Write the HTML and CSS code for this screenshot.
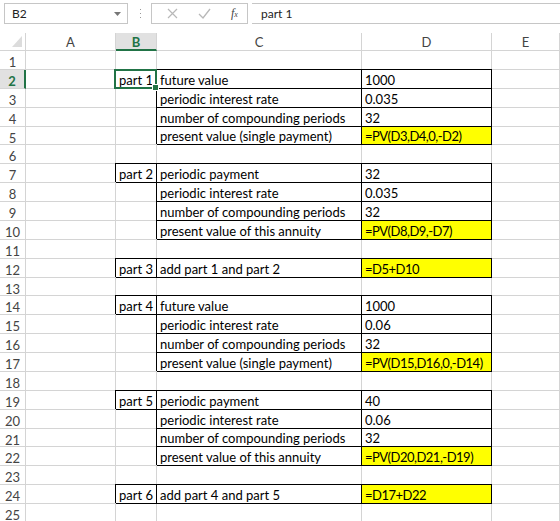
FILE: index.html
```html
<!DOCTYPE html>
<html lang="en">
<head>
    <meta charset="UTF-8">
    <title>Book1 - PV</title>
    <link rel="stylesheet" href="styles.css">
</head>
<body>
    <div class="fbar">
        <div class="namebox">
            <span>B2</span>
            <svg class="drop" width="7" height="4" viewBox="0 0 7 4"><path d="M0 0h7L3.5 4z" fill="#777"/></svg>
        </div>
        <svg class="grip" width="3" height="12" viewBox="0 0 3 12">
            <rect x="1" y="1" width="1" height="1" fill="#999"/>
            <rect x="1" y="5" width="1" height="1" fill="#999"/>
            <rect x="1" y="9" width="1" height="1" fill="#999"/>
        </svg>
        <div class="fbtns">
            <svg width="11" height="11" viewBox="0 0 11 11"><path d="M1 1l9 9M10 1l-9 9" stroke="#b8b8b8" stroke-width="1.2"/></svg>
            <svg width="13" height="11" viewBox="0 0 13 11"><path d="M1 6l4 4 7-9" stroke="#b8b8b8" stroke-width="1.3" fill="none"/></svg>
            <span class="fx">f<small>x</small></span>
        </div>
        <div class="finput">part 1</div>
    </div>

    <div class="sheet">
        <div class="row head">
            <div class="rh corner"><svg width="10" height="11" viewBox="0 0 10 11"><path d="M10 0v11H0z" fill="#dcdcdc"/></svg></div>
            <div class="ch ca">A</div>
            <div class="ch cb on">B</div>
            <div class="ch cc">C</div>
            <div class="ch cd">D</div>
            <div class="ch ce">E</div>
        </div>

        <div class="row"><div class="rh">1</div><div class="c ca"></div><div class="c cb"></div><div class="c cc"></div><div class="c cd"></div><div class="c ce"></div></div>
        <div class="row"><div class="rh on">2</div><div class="c ca"></div><div class="c cb bx cur">part 1</div><div class="c cc bx">future value</div><div class="c cd bx">1000</div><div class="c ce"></div></div>
        <div class="row"><div class="rh">3</div><div class="c ca"></div><div class="c cb"></div><div class="c cc bx">periodic interest rate</div><div class="c cd bx">0.035</div><div class="c ce"></div></div>
        <div class="row"><div class="rh">4</div><div class="c ca"></div><div class="c cb"></div><div class="c cc bx">number of compounding periods</div><div class="c cd bx">32</div><div class="c ce"></div></div>
        <div class="row"><div class="rh">5</div><div class="c ca"></div><div class="c cb"></div><div class="c cc bx">present value (single payment)</div><div class="c cd bx hl">=PV(D3,D4,0,-D2)</div><div class="c ce"></div></div>
        <div class="row"><div class="rh">6</div><div class="c ca"></div><div class="c cb"></div><div class="c cc"></div><div class="c cd"></div><div class="c ce"></div></div>
        <div class="row"><div class="rh">7</div><div class="c ca"></div><div class="c cb bx">part 2</div><div class="c cc bx">periodic payment</div><div class="c cd bx">32</div><div class="c ce"></div></div>
        <div class="row"><div class="rh">8</div><div class="c ca"></div><div class="c cb"></div><div class="c cc bx">periodic interest rate</div><div class="c cd bx">0.035</div><div class="c ce"></div></div>
        <div class="row"><div class="rh">9</div><div class="c ca"></div><div class="c cb"></div><div class="c cc bx">number of compounding periods</div><div class="c cd bx">32</div><div class="c ce"></div></div>
        <div class="row"><div class="rh">10</div><div class="c ca"></div><div class="c cb"></div><div class="c cc bx">present value of this annuity</div><div class="c cd bx hl">=PV(D8,D9,-D7)</div><div class="c ce"></div></div>
        <div class="row"><div class="rh">11</div><div class="c ca"></div><div class="c cb"></div><div class="c cc"></div><div class="c cd"></div><div class="c ce"></div></div>
        <div class="row"><div class="rh">12</div><div class="c ca"></div><div class="c cb bx">part 3</div><div class="c cc bx">add part 1 and part 2</div><div class="c cd bx hl">=D5+D10</div><div class="c ce"></div></div>
        <div class="row"><div class="rh">13</div><div class="c ca"></div><div class="c cb"></div><div class="c cc"></div><div class="c cd"></div><div class="c ce"></div></div>
        <div class="row"><div class="rh">14</div><div class="c ca"></div><div class="c cb bx">part 4</div><div class="c cc bx">future value</div><div class="c cd bx">1000</div><div class="c ce"></div></div>
        <div class="row"><div class="rh">15</div><div class="c ca"></div><div class="c cb"></div><div class="c cc bx">periodic interest rate</div><div class="c cd bx">0.06</div><div class="c ce"></div></div>
        <div class="row"><div class="rh">16</div><div class="c ca"></div><div class="c cb"></div><div class="c cc bx">number of compounding periods</div><div class="c cd bx">32</div><div class="c ce"></div></div>
        <div class="row"><div class="rh">17</div><div class="c ca"></div><div class="c cb"></div><div class="c cc bx">present value (single payment)</div><div class="c cd bx hl">=PV(D15,D16,0,-D14)</div><div class="c ce"></div></div>
        <div class="row"><div class="rh">18</div><div class="c ca"></div><div class="c cb"></div><div class="c cc"></div><div class="c cd"></div><div class="c ce"></div></div>
        <div class="row"><div class="rh">19</div><div class="c ca"></div><div class="c cb bx">part 5</div><div class="c cc bx">periodic payment</div><div class="c cd bx">40</div><div class="c ce"></div></div>
        <div class="row"><div class="rh">20</div><div class="c ca"></div><div class="c cb"></div><div class="c cc bx">periodic interest rate</div><div class="c cd bx">0.06</div><div class="c ce"></div></div>
        <div class="row"><div class="rh">21</div><div class="c ca"></div><div class="c cb"></div><div class="c cc bx">number of compounding periods</div><div class="c cd bx">32</div><div class="c ce"></div></div>
        <div class="row"><div class="rh">22</div><div class="c ca"></div><div class="c cb"></div><div class="c cc bx">present value of this annuity</div><div class="c cd bx hl">=PV(D20,D21,-D19)</div><div class="c ce"></div></div>
        <div class="row"><div class="rh">23</div><div class="c ca"></div><div class="c cb"></div><div class="c cc"></div><div class="c cd"></div><div class="c ce"></div></div>
        <div class="row"><div class="rh">24</div><div class="c ca"></div><div class="c cb bx">part 6</div><div class="c cc bx">add part 4 and part 5</div><div class="c cd bx hl">=D17+D22</div><div class="c ce"></div></div>
        <div class="row"><div class="rh">25</div><div class="c ca"></div><div class="c cb"></div><div class="c cc"></div><div class="c cd"></div><div class="c ce"></div></div>
    </div>
</body>
</html>
```

FILE: styles.css
```css
body {
    margin: 0;
    background: #fff;
    font-family: Lato, "Liberation Sans", sans-serif;
    color: #000;
    overflow: hidden;
}

/* formula bar */
.fbar {
    display: flex;
    align-items: center;
    height: 21px;
    padding: 3px 0 9px 0;
}

.namebox {
    box-sizing: border-box;
    width: 124px;
    height: 21px;
    margin-left: 4px;
    border: 1px solid #c6c6c6;
    display: flex;
    align-items: center;
    justify-content: space-between;
    padding: 0 6px 0 7px;
    font-size: 12px;
    color: #222;
}

.grip {
    margin: 0 9px 0 11px;
}

.fbtns {
    box-sizing: border-box;
    width: 97px;
    height: 21px;
    border: 1px solid #c6c6c6;
    display: flex;
    align-items: center;
    gap: 20px;
    padding-left: 15px;
}

.fx {
    font-family: "Liberation Serif", serif;
    font-style: italic;
    font-size: 12px;
    color: #444;
}

.fx small {
    font-size: 8px;
}

.finput {
    box-sizing: border-box;
    flex: 1;
    height: 21px;
    margin-left: 4px;
    border-top: 1px solid #c6c6c6;
    border-bottom: 1px solid #c6c6c6;
    padding-left: 9px;
    font-size: 12px;
    line-height: 19px;
    color: #222;
}

/* grid */
.row {
    display: flex;
    height: 18.875px;
}

.row.head {
    height: 18px;
}

.rh, .ch, .c {
    box-sizing: border-box;
    border-right: 1px solid #d4d4d4;
    border-bottom: 1px solid #d4d4d4;
    flex: none;
}

.rh {
    width: 26px;
    font-size: 13px;
    color: #444;
    text-align: center;
    line-height: 18px;
    padding-top: 2px;
}

.rh.on {
    background: #e1e1e1;
    border-right: 2px solid #217346;
    color: #217346;
    font-weight: bold;
}

.rh.corner {
    display: flex;
    align-items: flex-end;
    justify-content: flex-end;
    padding: 0 3px 3px 0;
}

.ch {
    font-size: 13px;
    color: #444;
    text-align: center;
    line-height: 17px;
    padding-top: 1px;
}

.ch.on {
    background: #e1e1e1;
    border-bottom: 2px solid #217346;
    color: #217346;
    font-weight: bold;
}

.ca { width: 90px; }
.cb { width: 41px; }
.cc { width: 205px; }
.cd { width: 130px; }
.ce { flex: 1; }

.c {
    font-size: 13px;
    line-height: 15px;
    padding: 0 2px 0 3px;
    display: flex;
    align-items: flex-end;
    white-space: nowrap;
}

/* cell with a thin black box */
.bx {
    border-right-color: #000;
    border-bottom-color: #000;
    box-shadow: -1px -1px 0 #000, 0 -1px 0 #000;
}

.hl {
    background: #ffff00;
    letter-spacing: -0.5px;
}

/* active cell */
.cur {
    position: relative;
    z-index: 2;
}

.cur::after {
    content: "";
    position: absolute;
    left: -2px;
    top: -1px;
    right: -1px;
    bottom: -1px;
    border: 2px solid #217346;
}

.cur::before {
    content: "";
    position: absolute;
    right: -3px;
    bottom: -3px;
    width: 5px;
    height: 5px;
    background: #217346;
    border: 1px solid #fff;
    z-index: 1;
}
```
